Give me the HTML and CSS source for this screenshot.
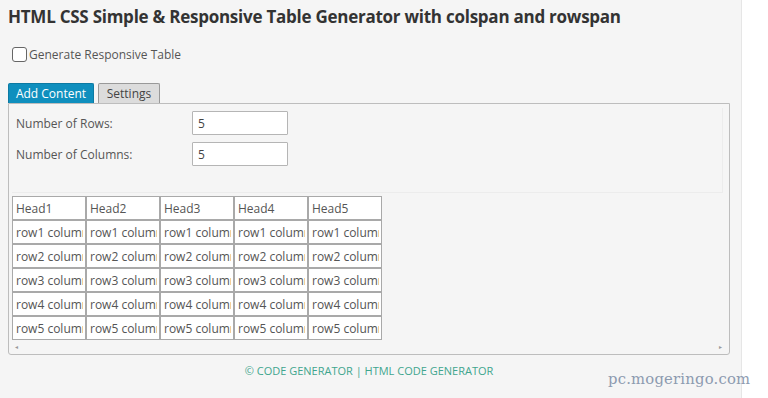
FILE: index.html
```html
<!DOCTYPE html>
<html>
<head>
<meta charset="utf-8">
<link rel="stylesheet" href="styles.css">
</head>
<body>
<div class="page">
  <div class="main">
    <h1 class="title">HTML CSS Simple &amp; Responsive Table Generator with colspan and rowspan</h1>
    <label class="check"><span class="box"></span>Generate Responsive Table</label>
    <div class="tabs">
      <span class="tab active">Add Content</span>
      <span class="tab">Settings</span>
    </div>
    <div class="panel">
      <div class="form">
        <div class="row"><span class="lbl">Number of Rows:</span><span class="inp">5</span></div>
        <div class="row"><span class="lbl">Number of Columns:</span><span class="inp">5</span></div>
      </div>
      <div class="scroller">
        <table class="grid">
          <tr><td><input class="cell" readonly value="Head1"></td><td><input class="cell" readonly value="Head2"></td><td><input class="cell" readonly value="Head3"></td><td><input class="cell" readonly value="Head4"></td><td><input class="cell" readonly value="Head5"></td></tr>
          <tr><td><input class="cell" readonly value="row1 column1"></td><td><input class="cell" readonly value="row1 column2"></td><td><input class="cell" readonly value="row1 column3"></td><td><input class="cell" readonly value="row1 column4"></td><td><input class="cell" readonly value="row1 column5"></td></tr>
          <tr><td><input class="cell" readonly value="row2 column1"></td><td><input class="cell" readonly value="row2 column2"></td><td><input class="cell" readonly value="row2 column3"></td><td><input class="cell" readonly value="row2 column4"></td><td><input class="cell" readonly value="row2 column5"></td></tr>
          <tr><td><input class="cell" readonly value="row3 column1"></td><td><input class="cell" readonly value="row3 column2"></td><td><input class="cell" readonly value="row3 column3"></td><td><input class="cell" readonly value="row3 column4"></td><td><input class="cell" readonly value="row3 column5"></td></tr>
          <tr><td><input class="cell" readonly value="row4 column1"></td><td><input class="cell" readonly value="row4 column2"></td><td><input class="cell" readonly value="row4 column3"></td><td><input class="cell" readonly value="row4 column4"></td><td><input class="cell" readonly value="row4 column5"></td></tr>
          <tr><td><input class="cell" readonly value="row5 column1"></td><td><input class="cell" readonly value="row5 column2"></td><td><input class="cell" readonly value="row5 column3"></td><td><input class="cell" readonly value="row5 column4"></td><td><input class="cell" readonly value="row5 column5"></td></tr>
        </table>
        <div class="bar"><span class="arr">&#9666;</span><span class="arr">&#9656;</span></div>
      </div>
    </div>
    <div class="footer">&copy; CODE GENERATOR | HTML CODE GENERATOR</div>
  </div>
  <div class="side"></div>
</div>
<div class="mark">pc.mogeringo.com</div>
</body>
</html>
```
FILE: styles.css
```css
html, body { margin: 0; padding: 0; }
body {
  width: 768px;
  height: 398px;
  overflow: hidden;
  font-family: "Open Sans", "Liberation Sans", sans-serif;
  color: #555;
  position: relative;
}
.page { display: flex; height: 398px; }
.main {
  width: 742px;
  background: #f5f5f5;
  padding: 0 12px 0 8px;
  box-sizing: border-box;
  border-right: 1px solid #e6e6e6;
}
.side { flex: 1; background: #fff; }
.title {
  margin: 0;
  padding-top: 6px;
  font-size: 17px;
  line-height: 22px;
  font-weight: 700;
  color: #333;
  letter-spacing: -0.25px;
}
.check {
  display: flex;
  align-items: center;
  margin-top: 18px;
  margin-left: 4px;
  font-size: 12px;
  color: #555;
  height: 16px;
}
.box {
  width: 13px; height: 13px;
  border: 1px solid #666;
  border-radius: 3px;
  background: #fff;
  margin-right: 2px;
}
.tabs { display: flex; gap: 4px; margin-top: 21px; height: 20px; }
.tab {
  display: flex; align-items: center; justify-content: center;
  font-size: 12px;
  box-sizing: border-box;
  height: 20px;
  border: 1px solid #999;
  border-bottom: none;
  border-radius: 2px 2px 0 0;
  background: #dcdcdc;
  color: #444;
  width: 62px;
}
.tab.active {
  width: 86px;
  background: #0f8fbe;
  border-color: #0c7aa3;
  color: #fff;
}
.panel {
  width: 722px;
  box-sizing: border-box;
  height: 252px;
  border: 1px solid #bdbdbd;
  border-radius: 0 0 3px 3px;
  padding: 4px 4px 0 3px;
}
.form {
  height: 85px;
  border-bottom: 1px solid #ececec;
  border-right: 1px solid #ececec;
  margin-right: 2px;
  padding-top: 3px;
  box-sizing: border-box;
}
.row { display: flex; align-items: center; height: 24px; margin-bottom: 7px; }
.lbl { width: 176px; padding-left: 4px; font-size: 12px; color: #555; }
.inp {
  width: 96px; height: 24px; box-sizing: border-box;
  border: 1px solid #b5b5b5;
  background: #fff;
  border-radius: 1px;
  font-size: 12px;
  padding-left: 5px;
  display: flex; align-items: center;
  color: #444;
}
.scroller { margin-top: 3px; }
.grid {
  border-collapse: separate;
  border-spacing: 0;
  table-layout: fixed;
}
.grid td {
  width: 74px;
  height: 24px;
  padding: 0;
  box-sizing: border-box;
}
.cell {
  display: block;
  width: 74px;
  height: 24px;
  box-sizing: border-box;
  margin: 0;
  border: 1px solid #a9a9a9;
  outline: none;
  background: #fff;
  font-family: "Open Sans", "Liberation Sans", sans-serif;
  font-size: 12px;
  color: #555;
  padding: 0 2px 0 3px;
  border-radius: 0;
}
.bar {
  display: flex;
  justify-content: space-between;
  height: 12px;
  align-items: center;
  padding: 0 3px;
  margin-top: 1px;
}
.arr { font-size: 6px; color: #999; }
.footer {
  text-align: center;
  font-size: 11px;
  color: #3fa58e;
  margin-top: 8px;
  width: 722px;
}
.mark {
  position: absolute;
  left: 608px;
  top: 370px;
  font-family: "DejaVu Serif", "Liberation Serif", serif;
  font-size: 14.8px;
  color: #8d9bb0;
  letter-spacing: 0.2px;
}
```
